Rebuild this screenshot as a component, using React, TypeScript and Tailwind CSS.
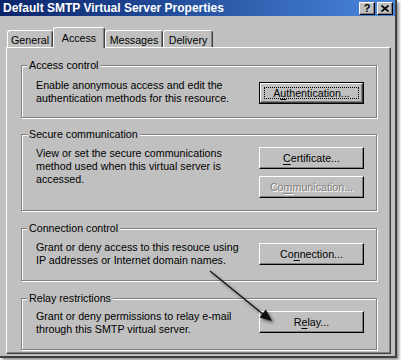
import React from "react";

interface WinButtonProps {
  label: string;
  underline: number;
  isDefault?: boolean;
  disabled?: boolean;
}

// classic raised push button, optional default (black rim + focus rect) or greyed out
const WinButton: React.FC<WinButtonProps> = ({ label, underline, isDefault, disabled }) => {
  const before = label.slice(0, underline);
  const mid = label[underline];
  const after = label.slice(underline + 1);

  const text = (
    <span
      className={
        disabled
          ? "text-[#808080] [text-shadow:1px_1px_0_#ffffff]"
          : "text-black"
      }
    >
      {before}
      <span className="underline underline-offset-2">{mid}</span>
      {after}
    </span>
  );

  if (isDefault) {
    return (
      <div className="h-[22px] w-[105px] border border-black">
        <div className="relative flex h-full w-full items-center justify-center border border-t-white border-l-white border-r-[#404040] border-b-[#404040] shadow-[inset_-1px_-1px_0_#808080]">
          <div className="absolute inset-[3px] border border-dotted border-black" />
          {text}
        </div>
      </div>
    );
  }

  return (
    <div className="flex h-[22px] w-[105px] items-center justify-center border border-t-white border-l-white border-r-black border-b-black shadow-[inset_-1px_-1px_0_#808080]">
      {text}
    </div>
  );
};

interface GroupProps {
  title: string;
  lines: string[];
  buttons: WinButtonProps[];
  box: string;
  textPad: string;
  btnPad: string;
}

const Group: React.FC<GroupProps> = ({ title, lines, buttons, box, textPad, btnPad }) => (
  <div
    className={`relative ml-[14px] flex w-[356px] justify-between border border-[#808080] shadow-[inset_1px_1px_0_#ffffff,1px_1px_0_#ffffff] ${box}`}
  >
    <span className="absolute -top-[7px] left-[5px] bg-[#c0c0c0] px-[2px] leading-[13px]">
      {title}
    </span>
    <div className={`pl-[14px] leading-[13px] ${textPad}`}>
      {lines.map((line) => (
        <div key={line}>{line}</div>
      ))}
    </div>
    <div className={`flex flex-col gap-[7px] pr-[12px] ${btnPad}`}>
      {buttons.map((b) => (
        <WinButton key={b.label} {...b} />
      ))}
    </div>
  </div>
);

const tabs = [
  { name: "General", w: "w-[46px]" },
  { name: "Access", w: "w-[52px]", active: true },
  { name: "Messages", w: "w-[58px]" },
  { name: "Delivery", w: "w-[50px]" },
];

export default function App() {
  return (
    <div className="relative h-[360px] w-[401px] bg-white font-['Liberation_Sans',Arial,sans-serif] text-[10.7px] text-black">
      <div className="h-[358px] w-[397px] border-r-2 border-b-2 border-[#404040] bg-[#c0c0c0] shadow-[2px_2px_3px_rgba(0,0,0,0.45)]">
        {/* title bar */}
        <div className="flex h-[16px] items-center justify-between bg-gradient-to-r from-[#0a246a] to-[#4a86dc] pl-[3px] pr-[2px]">
          <span className="text-[12px] font-bold leading-none text-white">
            Default SMTP Virtual Server Properties
          </span>
          <div className="flex gap-[2px]">
            <div className="flex h-[13px] w-[16px] items-center justify-center border border-t-white border-l-white border-r-black border-b-black bg-[#c0c0c0] shadow-[inset_-1px_-1px_0_#808080] text-[11px] font-bold leading-none">
              ?
            </div>
            <div className="flex h-[13px] w-[16px] items-center justify-center border border-t-white border-l-white border-r-black border-b-black bg-[#c0c0c0] shadow-[inset_-1px_-1px_0_#808080]">
              <svg width="8" height="7" viewBox="0 0 8 7">
                <path d="M0.5 0.5 L7.5 6.5 M7.5 0.5 L0.5 6.5" stroke="black" strokeWidth="1.6" />
              </svg>
            </div>
          </div>
        </div>

        {/* tabs */}
        <div className="mt-[11px] flex h-[20px] items-end pl-[7px]">
          {tabs.map((t) =>
            t.active ? (
              <div
                key={t.name}
                className={`relative z-10 -mb-[1px] flex h-[21px] items-start justify-center rounded-t-[3px] border-t border-l border-r border-t-white border-l-white border-r-[#404040] bg-[#c0c0c0] pt-[2px] shadow-[inset_-1px_0_0_#808080] ${t.w}`}
              >
                {t.name}
              </div>
            ) : (
              <div
                key={t.name}
                className={`flex h-[17px] items-start justify-center rounded-t-[3px] border-t border-l border-r border-t-white border-l-white border-r-[#404040] pt-[1px] shadow-[inset_-1px_0_0_#808080] ${t.w}`}
              >
                {t.name}
              </div>
            )
          )}
        </div>

        {/* tab page */}
        <div className="ml-[6px] h-[307px] w-[385px] border border-t-white border-l-white border-r-[#404040] border-b-[#404040] shadow-[inset_-1px_-1px_0_#808080]">
          <Group
            title="Access control"
            lines={["Enable anonymous access and edit the", "authentication methods for this resource."]}
            buttons={[{ label: "Authentication...", underline: 1, isDefault: true }]}
            box="mt-[17px] h-[53px]"
            textPad="pt-[13px]"
            btnPad="pt-[16px]"
          />
          <Group
            title="Secure communication"
            lines={[
              "View or set the secure communications",
              "method used when this virtual server is",
              "accessed.",
            ]}
            buttons={[
              { label: "Certificate...", underline: 0 },
              { label: "Communication...", underline: 2, disabled: true },
            ]}
            box="mt-[16px] h-[77px]"
            textPad="pt-[12px]"
            btnPad="pt-[12px]"
          />
          <Group
            title="Connection control"
            lines={[
              "Grant or deny access to this resouce using",
              "IP addresses or Internet domain names.",
            ]}
            buttons={[{ label: "Connection...", underline: 2 }]}
            box="mt-[17px] h-[53px]"
            textPad="pt-[12px]"
            btnPad="pt-[14px]"
          />
          <Group
            title="Relay restrictions"
            lines={[
              "Grant or deny permissions to relay e-mail",
              "through this SMTP virtual server.",
            ]}
            buttons={[{ label: "Relay...", underline: 1 }]}
            box="mt-[17px] h-[52px]"
            textPad="pt-[11px]"
            btnPad="pt-[12px]"
          />
        </div>
      </div>

      {/* annotation arrow */}
      <svg className="pointer-events-none absolute left-0 top-0" width="401" height="360">
        <defs>
          <filter id="arrowShadow" x="-50%" y="-50%" width="200%" height="200%">
            <feDropShadow dx="2" dy="2" stdDeviation="1.5" floodColor="#000" floodOpacity="0.55" />
          </filter>
        </defs>
        <g filter="url(#arrowShadow)">
          <line x1="210" y1="271" x2="264" y2="315" stroke="#111" strokeWidth="1.2" />
          <polygon points="272,321 259.6,317.4 265.8,309.6" fill="#111" />
        </g>
      </svg>
    </div>
  );
}
